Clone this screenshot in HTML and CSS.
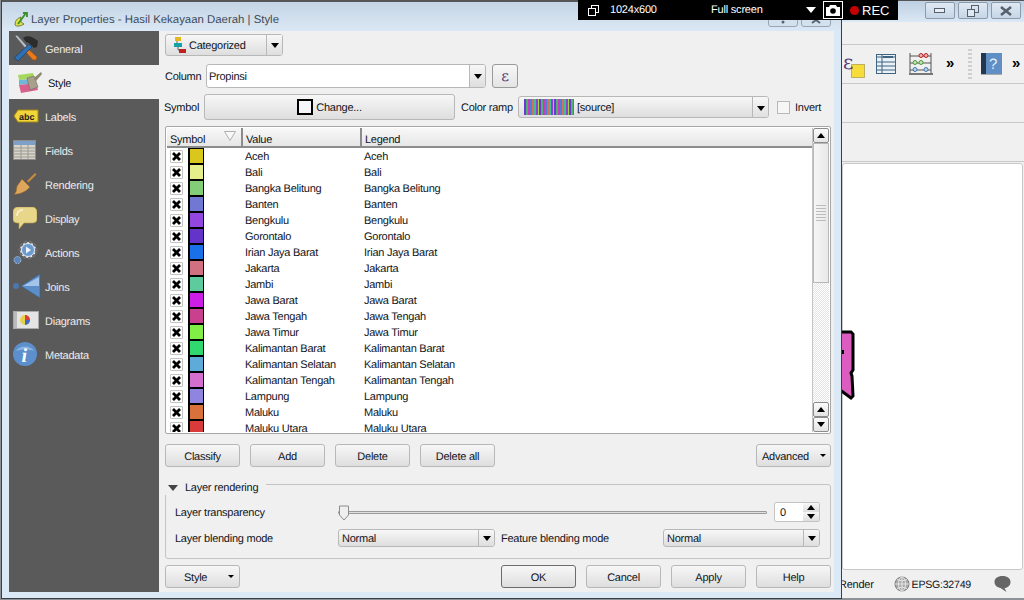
FILE: index.html
```html
<!DOCTYPE html>
<html lang="id">
<head>
  <meta charset="UTF-8" />
  <title>Layer Properties</title>
  <link rel="stylesheet" href="styles.css">
</head>
<body>
  <!-- main window behind the dialog -->
  <div class="main-window">
    <div class="win-title">
      <div class="win-btn"><svg width="12" height="6"><rect x="0.5" y="0.5" width="10" height="4" fill="#e8eef4" stroke="#56606c"/></svg></div>
      <div class="win-btn"><svg width="12" height="12"><rect x="4.5" y="0.5" width="7" height="7" fill="none" stroke="#56606c"/><rect x="0.5" y="4.5" width="7" height="7" fill="#dfe8f2" stroke="#56606c"/></svg></div>
      <div class="win-btn"><svg width="12" height="10"><path d="M1 1l10 8M11 1L1 9" stroke="#56606c" stroke-width="2.5"/></svg></div>
    </div>
    <div class="tool-row tool-row-blank"></div>
    <div class="tool-row tool-row-icons">
      <svg class="tool-eps" width="22" height="30" viewBox="0 0 22 30">
        <rect x="8.5" y="15.5" width="13" height="13" fill="#f6dd3c" stroke="#8a7a20" stroke-dasharray="1 1"/>
        <text x="0" y="20" class="eps-glyph">ε</text>
      </svg>
      <svg class="tool-table" width="20" height="20" viewBox="0 0 20 20">
        <rect x="0.5" y="0.5" width="19" height="19" fill="#e9f0f6" stroke="#3f6582"/>
        <path d="M1 3h18M1 8h18M1 12h18M1 16h18M6 1v18" stroke="#3f6582" fill="none"/>
        <rect x="7" y="2" width="10" height="2" fill="#3f6582"/>
      </svg>
      <svg class="tool-abacus" width="24" height="24" viewBox="0 0 24 24">
        <path d="M1 1v20M22 1v20M1 4h21M1 11h21M1 18h21" stroke="#555" fill="none"/>
        <rect x="0" y="21" width="24" height="2" fill="#777"/>
        <circle cx="12" cy="3.5" r="2" fill="#f2b0b0" stroke="#b52020"/><circle cx="17" cy="3.5" r="2" fill="#f2b0b0" stroke="#b52020"/>
        <circle cx="6" cy="10.500" r="2" fill="#bfe3b0" stroke="#4e9a3a"/><circle cx="12" cy="10.500" r="2" fill="#bfe3b0" stroke="#4e9a3a"/>
        <circle cx="6" cy="17.500" r="2" fill="#bcd4ea" stroke="#3f78aa"/><circle cx="17" cy="17.500" r="2" fill="#bcd4ea" stroke="#3f78aa"/>
      </svg>
      <span class="more more-a">»</span>
      <span class="tool-grip"></span>
      <svg class="tool-help" width="21" height="22" viewBox="0 0 21 22">
        <rect x="0" y="0" width="21" height="21" fill="#5f8fc4"/>
        <rect x="0" y="0" width="5" height="21" fill="#22384f"/>
        <rect x="0" y="21" width="21" height="1" fill="#aaa"/>
        <text x="8" y="16" class="help-glyph">?</text>
      </svg>
      <span class="more more-b">»</span>
    </div>
    <div class="tool-row tool-row-plain"></div>
    <div class="tool-row tool-row-plain"></div>
    <div class="canvas">
      <svg class="map-shape" width="13" height="72" viewBox="0 0 13 72">
        <path d="M-2 2h11l2 2v36l-2 3 1 3 1 20-2 2-11-8z" fill="#dc5cc0" stroke="#000" stroke-width="3"/>
        <path d="M0 20h2v4H0z" fill="#000"/>
      </svg>
    </div>
    <div class="status">
      <span class="status-render">Render</span>
      <svg class="status-globe" width="16" height="16" viewBox="0 0 16 16">
        <circle cx="8" cy="8" r="7" fill="#a9a9a9" stroke="#777"/>
        <path d="M1 8h14M8 1v14M3 3.500q5 3 10 0M3 12.500q5-3 10 0" stroke="#e6e6e6" fill="none"/>
        <ellipse cx="8" cy="8" rx="3.500" ry="7" fill="none" stroke="#e6e6e6"/>
      </svg>
      <span class="status-crs">EPSG:32749</span>
      <svg class="status-msg" width="17" height="16" viewBox="0 0 17 16">
        <path d="M8.500 0c5 0 8 2.500 8 6s-3 6-6 6l2 4-6-4c-3-.5-6-2.500-6-6s3-6 8-6z" fill="#666"/>
      </svg>
    </div>
  </div>

  <!-- layer properties dialog -->
  <div class="dialog">
    <div class="dialog-title">
      <svg class="qgis-icon" width="14" height="15" viewBox="0 0 14 15">
        <path d="M1 13C1 7 5 6 7 5c-1 3 0 6 3 7-3 2-7 3-9 1z" fill="#dfe04a" stroke="#566b1c" stroke-width=".8"/>
        <path d="M4 12L12 1M9 1h4v4" stroke="#3d8f28" stroke-width="1.800" fill="none"/>
      </svg>
      <span class="dialog-title-text">Layer Properties - Hasil Kekayaan Daerah | Style</span>
      <span class="title-btn"><svg width="4" height="6"><circle cx="2" cy="4" r="1.500" fill="#5a6470"/></svg></span>
      <span class="title-btn"><svg width="10" height="6"><path d="M1 5l4-3 4 3" stroke="#5a6470" stroke-width="2" fill="none"/></svg></span>
    </div>

    <div class="dialog-body">
      <div class="sidebar">
        <div class="side-item">
          <svg class="side-icon" width="26" height="26" viewBox="0 0 26 26">
            <path d="M2 1l2-1 10 11-2 2z" fill="#b8c0c8" stroke="#555" stroke-width=".6"/>
            <path d="M13 12l11 10-1 3-3 0-10-11z" fill="#ea7a1c" stroke="#9a4a10" stroke-width=".6"/>
            <path d="M16 9l3 3L5 26l-4-3z" fill="#2f6fb4" stroke="#17385c" stroke-width=".6"/>
            <path d="M10 3c4-3 9-2 15 3l-1 6-3 1-5-5-3-1z" fill="#2c2c2c"/>
          </svg>
          <span>General</span>
        </div>
        <div class="side-item side-item-active">
          <svg class="side-icon" width="26" height="22" viewBox="0 0 26 22">
            <path d="M2 4l15-2 2 6-16 1z" fill="#a6d860"/>
            <path d="M3 9l16-1 1 4-17 2z" fill="#6fb6d8"/>
            <path d="M3 14l17-2 2 7-17 3z" fill="#d8608c"/>
            <path d="M11 7l7-2 4 11-8 3z" fill="#a8a08c" stroke="#6e685a" stroke-width=".6"/>
            <path d="M18 7l7-6 1 2-6 7z" fill="#8c8672"/>
          </svg>
          <span>Style</span>
        </div>
        <div class="side-item">
          <svg class="side-icon" width="26" height="14" viewBox="0 0 26 14">
            <path d="M1 7l4-6h20v12H5z" fill="#f2d43c" stroke="#a58a10"/>
            <text x="6" y="10.500" class="abc-glyph">abc</text>
          </svg>
          <span>Labels</span>
        </div>
        <div class="side-item">
          <svg class="side-icon" width="24" height="20" viewBox="0 0 24 20">
            <rect x="0.500" y="0.500" width="22" height="19" fill="#d8d4c8" stroke="#8c8c8c"/>
            <rect x="1" y="1" width="21" height="4" fill="#7ea0c8"/>
            <path d="M1 8h21M1 11h21M1 14h21M1 17h21M8 5v14M15 5v14" stroke="#9a9a94" fill="none"/>
          </svg>
          <span>Fields</span>
        </div>
        <div class="side-item">
          <svg class="side-icon" width="24" height="24" viewBox="0 0 24 24">
            <path d="M14 9l8-8 1.500 1.500-8 8z" fill="#c88a3c"/>
            <path d="M9 7l8 8-3 3c-3 2-8 5-13 4 3-2 2-5 3-8z" fill="#dca65c" stroke="#8a5a20" stroke-width=".6"/>
          </svg>
          <span>Rendering</span>
        </div>
        <div class="side-item">
          <svg class="side-icon" width="24" height="22" viewBox="0 0 24 22">
            <path d="M5 0h14c3 0 5 2 5 5v7c0 3-2 4-5 4h-8l-5 6 0-6H5c-3 0-5-1-5-4V5c0-3 2-5 5-5z" fill="#e8d68a" stroke="#b8a040" stroke-width=".6"/>
            <path d="M4 9c0-4 2-6 6-6" stroke="#fbf6dc" stroke-width="1.500" fill="none"/>
          </svg>
          <span>Display</span>
        </div>
        <div class="side-item">
          <svg class="side-icon" width="26" height="26" viewBox="0 0 26 26">
            <circle cx="15" cy="11" r="8" fill="#e8eef4" stroke="#6c6c6c" stroke-width="3" stroke-dasharray="3 1.800"/>
            <circle cx="15" cy="11" r="6.500" fill="#6a9ad0" stroke="#dfe8f2"/>
            <path d="M13 7.500l5 3.500-5 3.500z" fill="#f2f6fa"/>
            <circle cx="4.500" cy="21" r="3.500" fill="#5a86bc" stroke="#a8bcd0" stroke-dasharray="2 1"/>
          </svg>
          <span>Actions</span>
        </div>
        <div class="side-item">
          <svg class="side-icon" width="28" height="26" viewBox="0 0 28 26">
            <path d="M8 13L27 1v24z" fill="#5c8ec8" stroke="#34608e" stroke-width=".6"/>
            <path d="M10 13l16-9v9z" fill="#a4c4e8"/>
            <circle cx="3" cy="13" r="3" fill="#4a78ac"/>
          </svg>
          <span>Joins</span>
        </div>
        <div class="side-item">
          <svg class="side-icon" width="26" height="18" viewBox="0 0 26 18">
            <rect x="0.500" y="0.500" width="25" height="17" fill="#e4e4e4" stroke="#aaa"/>
            <rect x="1" y="1" width="3" height="16" fill="#bbb"/>
            <circle cx="12" cy="9" r="5" fill="#e8d04a"/>
            <path d="M12 9V4a5 5 0 0 1 5 5z" fill="#d83c3c"/>
            <path d="M12 9h5a5 5 0 0 1-5 5z" fill="#3c68c8"/>
          </svg>
          <span>Diagrams</span>
        </div>
        <div class="side-item">
          <svg class="side-icon" width="24" height="24" viewBox="0 0 24 24">
            <circle cx="12" cy="12" r="12" fill="#5c8fcc"/>
            <path d="M3 9a10 8 0 0 1 18 0c-5-2-13-2-18 0z" fill="#8cb4e0"/>
            <text x="8.500" y="20" class="info-glyph">i</text>
          </svg>
          <span>Metadata</span>
        </div>
      </div>

      <div class="panel">
        <div class="type-row">
          <div class="split-btn">
            <div class="split-main">
              <svg width="12" height="16" viewBox="0 0 12 16">
                <rect x="1" y="0" width="6" height="4" fill="#e8b818"/>
                <rect x="0" y="6" width="8" height="4" fill="#18a0a8"/>
                <rect x="5" y="12" width="7" height="4" fill="#c02020"/>
                <path d="M3 4v2M4 10v3h1" stroke="#666" fill="none"/>
              </svg>
              <span class="split-text">Categorized</span>
            </div>
            <div class="combo-arrow"><i class="tri"></i></div>
          </div>
        </div>

        <div class="column-row">
          <span class="column-label">Column</span>
          <div class="combo combo-edit combo-column">
            <span class="combo-text">Propinsi</span>
            <div class="combo-arrow"><i class="tri"></i></div>
          </div>
          <div class="eps-btn">ε</div>
        </div>

        <div class="symbol-row">
          <span class="symbol-label">Symbol</span>
          <div class="btn change-btn"><i class="change-swatch"></i>Change...</div>
          <span class="ramp-label">Color ramp</span>
          <div class="combo combo-ramp">
            <i class="ramp"></i>
            <span class="combo-text">[source]</span>
            <div class="combo-arrow"><i class="tri"></i></div>
          </div>
          <i class="check"></i>
          <span class="invert-label">Invert</span>
        </div>

        <div class="table">
          <div class="table-main">
            <div class="table-head">
              <div class="head-cell head-symbol">Symbol
                <svg class="sort-mark" width="12" height="10" viewBox="0 0 12 10"><path d="M.5.500h11L6 9.500z" fill="#f8f8f8" stroke="#b0b0b0"/></svg>
              </div>
              <div class="head-cell">Value</div>
              <div class="head-cell">Legend</div>
            </div>
            <div class="table-rows" id="rows"></div>
          </div>
          <div class="scrollbar">
            <div class="scroll-btn"><i class="tri tri-up"></i></div>
            <div class="scroll-thumb"><i class="scroll-grip"></i></div>
            <div class="scroll-track"></div>
            <div class="scroll-btn"><i class="tri tri-up"></i></div>
            <div class="scroll-btn"><i class="tri"></i></div>
          </div>
        </div>

        <div class="button-row">
          <div class="btn btn-std">Classify</div>
          <div class="btn btn-std">Add</div>
          <div class="btn btn-std">Delete</div>
          <div class="btn btn-std">Delete all</div>
          <div class="btn btn-std btn-advanced">Advanced<i class="tri tri-small"></i></div>
        </div>

        <div class="group">
          <div class="group-title"><i class="group-tri"></i>Layer rendering</div>
          <div class="group-row group-row-slider">
            <span class="group-label">Layer transparency</span>
            <div class="slider">
              <svg class="slider-handle" width="12" height="16" viewBox="0 0 12 16">
                <path d="M1.500 1h9v9l-4.500 5-4.500-5z" fill="#efefef" stroke="#8c8c8c"/>
              </svg>
            </div>
            <div class="spin">
              <span class="spin-value">0</span>
              <div class="spin-btns">
                <div class="spin-btn"><i class="tri tri-up"></i></div>
                <div class="spin-btn"><i class="tri"></i></div>
              </div>
            </div>
          </div>
          <div class="group-row">
            <span class="group-label">Layer blending mode</span>
            <div class="combo combo-blend">
              <span class="combo-text">Normal</span>
              <div class="combo-arrow"><i class="tri"></i></div>
            </div>
            <span class="feature-label">Feature blending mode</span>
            <div class="combo combo-blend">
              <span class="combo-text">Normal</span>
              <div class="combo-arrow"><i class="tri"></i></div>
            </div>
          </div>
        </div>

        <div class="bottom-row">
          <div class="btn btn-std btn-style">Style<i class="tri tri-small"></i></div>
          <div class="btn btn-std btn-ok">OK</div>
          <div class="btn btn-std">Cancel</div>
          <div class="btn btn-std">Apply</div>
          <div class="btn btn-std">Help</div>
        </div>
      </div>
    </div>
  </div>

  <!-- screen recorder bar -->
  <div class="recorder">
    <svg class="rec-size" width="11" height="11"><rect x="3.500" y="0.500" width="7" height="7" fill="none" stroke="#fff"/><rect x="0.500" y="3.500" width="7" height="7" fill="#000" stroke="#fff"/></svg>
    <span class="rec-dim">1024x600</span>
    <span class="rec-full">Full screen</span>
    <i class="rec-tri"></i>
    <div class="rec-cam">
      <svg width="14" height="11" viewBox="0 0 14 11"><path d="M0 2h3l1-2h6l1 2h3v9H0z" fill="#fff"/><circle cx="7" cy="6" r="2.800" fill="#000"/></svg>
    </div>
    <i class="rec-dot"></i>
    <span class="rec-label">REC</span>
  </div>

  <script>
    const classes = [
      ["Aceh", "#d9c71c"], ["Bali", "#e4ee8b"], ["Bangka Belitung", "#83cc78"],
      ["Banten", "#7178d3"], ["Bengkulu", "#9248e0"], ["Gorontalo", "#6433c9"],
      ["Irian Jaya Barat", "#1a70e8"], ["Jakarta", "#d07080"], ["Jambi", "#5ecb9f"],
      ["Jawa Barat", "#cc1ee6"], ["Jawa Tengah", "#c9408f"], ["Jawa Timur", "#80ee45"],
      ["Kalimantan Barat", "#30d970"], ["Kalimantan Selatan", "#5eaad8"],
      ["Kalimantan Tengah", "#d46fd0"], ["Lampung", "#8f85e0"],
      ["Maluku", "#d9713a"], ["Maluku Utara", "#d93a3a"]
    ];
    const rows = document.getElementById("rows");
    classes.forEach(([name, color]) => {
      const row = document.createElement("div");
      row.className = "row";
      row.innerHTML = `
        <div class="row-symbol">
          <span class="row-check"><svg width="9" height="9" viewBox="0 0 9 9"><path d="M1 1l7 7M8 1L1 8" stroke="#000" stroke-width="2.800"/></svg></span>
          <i class="swatch" style="background:${color}"></i>
        </div>
        <div class="row-value">${name}</div>
        <div class="row-legend">${name}</div>`;
      rows.appendChild(row);
    });
  </script>
</body>
</html>
```

FILE: styles.css
```css
* {
  box-sizing: border-box;
}

html, body {
  margin: 0;
  height: 100%;
}

body {
  position: relative;
  width: 1024px;
  height: 600px;
  overflow: hidden;
  background: #8d9299;
  font-family: "Liberation Sans", Arial, sans-serif;
  font-size: 11px;
  letter-spacing: -0.25px;
  color: #10141c;
  text-rendering: geometricPrecision;
}

i {
  display: block;
  flex: none;
}

/* text sits a pixel low in its box, as in the native widgets */
.split-text,
.combo-text,
.column-label,
.symbol-label,
.ramp-label,
.invert-label,
.group-label,
.feature-label,
.status-render,
.status-crs,
.spin-value,
.row-value,
.row-legend {
  padding-top: 2px;
}

/* main window */
.main-window {
  position: absolute;
  left: 600px;
  right: 0;
  top: 0;
  height: 598px;
  padding-left: 242px;
  display: flex;
  flex-direction: column;
  background: #f0f0f0;
  border-top: 1px solid #555;
}

.win-title {
  height: 21px;
  display: flex;
  justify-content: flex-end;
  gap: 3px;
  padding: 1px 3px 0 0;
  background: linear-gradient(#bdcfe2, #dbe8f5);
}

.win-btn {
  width: 30px;
  height: 17px;
  display: flex;
  align-items: center;
  justify-content: center;
  background: linear-gradient(#dfe9f4, #c6d6e6);
  border: 1px solid #8c9aaa;
  border-radius: 2px;
}

.tool-row {
  border-bottom: 1px solid #c8c8c8;
  flex: none;
}

.tool-row-blank {
  height: 23px;
}

.tool-row-icons {
  height: 39px;
  display: flex;
  align-items: center;
  position: relative;
}

.tool-row-plain {
  height: 39px;
}

.tool-row-plain + .tool-row-plain {
  margin-bottom: 1px;
}

.tool-eps {
  margin-left: 1px;
}

.eps-glyph {
  font-family: "DejaVu Serif", serif;
  font-size: 20px;
  fill: #5a3a78;
}

.tool-table {
  margin-left: 11px;
}

.tool-abacus {
  margin-left: 13px;
}

.more {
  font-size: 15px;
  font-weight: bold;
  color: #000;
  margin-top: -2px;
}

.more-a {
  margin-left: 13px;
}

.more-b {
  margin-left: 10px;
}

.tool-grip {
  width: 4px;
  height: 30px;
  margin-left: 14px;
  background: repeating-linear-gradient(#cfcfcf 0 2px, transparent 2px 4px);
}

.tool-help {
  margin-left: 9px;
}

.help-glyph {
  font-size: 15px;
  fill: #e8f0f8;
  font-family: "Liberation Sans", sans-serif;
}

.canvas {
  flex: 1;
  position: relative;
  background: #fff;
  border: 1px solid #c8c8c8;
  border-radius: 3px;
  margin-right: 1px;
}

.map-shape {
  position: absolute;
  left: -1px;
  top: 166px;
}

.status {
  height: 28px;
  flex: none;
  display: flex;
  align-items: center;
  margin-left: -3px;
}

.status-globe {
  margin-left: 20px;
  margin-right: 2px;
}

.status-crs {
  font-size: 10.600px;
}

.status-msg {
  margin-left: 23px;
}

/* dialog */
.dialog {
  position: absolute;
  left: 1px;
  top: 0;
  width: 841px;
  height: 599px;
  display: flex;
  flex-direction: column;
  border: 1px solid #3a3f46;
  border-top-width: 2px;
  border-top-color: #555;
  background: #dbe8f5;
}

.dialog-title {
  height: 29px;
  flex: none;
  display: flex;
  padding: 0 10px 0 12px;
  gap: 3px;
  background: linear-gradient(#c4d4e4, #dbe8f5);
}

.qgis-icon {
  margin-top: 10px;
  flex: none;
}

.dialog-title-text {
  flex: 1;
  line-height: 37px;
  font-size: 11.400px;
  letter-spacing: 0;
  color: #3d4a58;
}

.title-btn {
  width: 30px;
  height: 25px;
  display: flex;
  align-items: flex-end;
  justify-content: center;
  padding-bottom: 2px;
  background: #d3e0ee;
  border: 1px solid #97a6b6;
  border-radius: 0 0 3px 3px;
}

.dialog-body {
  flex: 1;
  display: flex;
  margin: 0 7px 6px;
  background: #f0f0f0;
  min-height: 0;
}

/* sidebar */
.sidebar {
  width: 150px;
  flex: none;
  background: #5a5a5a;
  color: #ececec;
}

.side-item {
  height: 34px;
  display: flex;
  align-items: center;
  position: relative;
  padding: 3px 0 0 36px;
}

.side-item-active {
  background: #f0f0f0;
  color: #10141c;
  padding-left: 39px;
}

.side-icon {
  position: absolute;
  left: 4px;
  top: 50%;
  transform: translateY(-50%);
}

.side-item-active .side-icon {
  left: 7px;
}

/* panel */
.panel {
  flex: 1;
  min-width: 0;
  display: flex;
  flex-direction: column;
  padding: 3px 3px 0 6px;
  background: #f0f0f0;
}

.btn {
  height: 23px;
  padding-top: 2px;
  display: flex;
  align-items: center;
  justify-content: center;
  background: linear-gradient(#f7f7f7, #dedede);
  border: 1px solid #b8b8b8;
  border-radius: 3px;
  flex: none;
}

.btn i {
  margin-top: -2px;
}

.btn-std {
  width: 75px;
}

.tri {
  width: 0;
  height: 0;
  border-left: 4px solid transparent;
  border-right: 4px solid transparent;
  border-top: 5px solid #000;
}

.tri-up {
  border-top: 0;
  border-bottom: 5px solid #000;
}

.tri-small {
  border-left-width: 3px;
  border-right-width: 3px;
  border-top-width: 3px;
}

.type-row {
  height: 22px;
  display: flex;
}

.split-btn {
  width: 118px;
  display: flex;
  background: linear-gradient(#f7f7f7, #dedede);
  border: 1px solid #b8b8b8;
  border-radius: 3px;
}

.split-main {
  flex: 1;
  display: flex;
  align-items: center;
  gap: 3px;
  padding-left: 8px;
}

.combo-arrow {
  width: 16px;
  flex: none;
  display: flex;
  align-items: center;
  justify-content: center;
  border-left: 1px solid #b8b8b8;
  align-self: stretch;
  background: linear-gradient(#f7f7f7, #dedede);
}

.column-row {
  height: 24px;
  margin-top: 8px;
  display: flex;
  align-items: center;
}

.column-label {
  width: 41px;
}

.combo {
  display: flex;
  align-items: stretch;
  background: linear-gradient(#f7f7f7, #dedede);
  border: 1px solid #b8b8b8;
  border-radius: 3px;
  flex: none;
  overflow: hidden;
}

.combo-text {
  flex: 1;
  display: flex;
  align-items: center;
  padding-left: 3px;
}

.combo-edit {
  background: #fff;
}

.combo-column {
  width: 280px;
  height: 24px;
}

.combo-column .combo-text {
  padding-left: 2px;
}

.eps-btn {
  width: 26px;
  height: 24px;
  margin-left: 6px;
  display: flex;
  align-items: center;
  justify-content: center;
  font-family: "DejaVu Serif", serif;
  font-size: 15px;
  color: #5a3a78;
  background: linear-gradient(#f7f7f7, #e4e4e4);
  border: 1px solid #9a9a9a;
  border-radius: 3px;
}

.symbol-row {
  height: 26px;
  margin-top: 6px;
  display: flex;
  align-items: center;
}

.symbol-label {
  width: 40px;
  margin-left: -1px;
}

.change-btn {
  width: 251px;
  height: 26px;
  gap: 3px;
}

.change-swatch {
  width: 16px;
  height: 16px;
  background: #f5f5fa;
  border: 2px solid #000;
}

.ramp-label {
  width: 57px;
  margin-left: 6px;
}

.combo-ramp {
  width: 251px;
  height: 22px;
  align-items: center;
}

.ramp {
  width: 50px;
  height: 16px;
  margin-left: 5px;
  background: repeating-linear-gradient(90deg, #6c3ad0 0 2px, #50b070 2px 4px, #c83cc0 4px 6px, #4a82d8 6px 8px, #d07060 8px 10px, #3cc090 10px 12px, #9040d8 12px 14px, #a0d840 14px 15px);
}

.combo-ramp .combo-arrow {
  height: 22px;
}

.check {
  width: 13px;
  height: 13px;
  margin: 0 5px 0 8px;
  background: #f6f6f6;
  border: 1px solid #b8b8b8;
}

/* table */
.table {
  height: 308px;
  margin-top: 6px;
  display: flex;
  padding: 1px;
  background: #fff;
  border: 1px solid #a8a8a8;
  border-radius: 2px;
}

.table-main {
  flex: 1;
  min-width: 0;
  display: flex;
  flex-direction: column;
}

.table-head {
  height: 20px;
  flex: none;
  display: grid;
  grid-template-columns: 76px 119px 1fr;
}

.head-cell {
  display: flex;
  align-items: center;
  position: relative;
  padding: 5px 0 0 3px;
  background: linear-gradient(#f8f8f8, #e6e6e6);
  border-right: 2px solid #8c8c8c;
  border-bottom: 2px solid #8c8c8c;
}

.head-cell:last-child {
  border-right: 0;
}

.sort-mark {
  position: absolute;
  right: 5px;
  top: 3px;
}

.table-rows {
  flex: 1;
  overflow: hidden;
  background: #fff;
}

.row {
  height: 16px;
  display: grid;
  grid-template-columns: 76px 119px 1fr;
  align-items: center;
}

.row-symbol {
  height: 16px;
  display: flex;
  align-items: center;
  padding-left: 3px;
}

.row-check {
  width: 13px;
  height: 13px;
  flex: none;
  margin-top: 1px;
  display: flex;
  align-items: center;
  justify-content: center;
  background: #fff;
  border: 1px solid #c4c4c4;
  border-radius: 1px;
}

.swatch {
  width: 16px;
  height: 16px;
  margin-left: 5px;
  border: 1px solid #000;
  border-left-width: 2px;
  border-right-width: 1px;
}

.row-value {
  padding-left: 2px;
}

.row-legend {
  padding-left: 2px;
}

.scrollbar {
  width: 17px;
  flex: none;
  display: flex;
  flex-direction: column;
  background: #fff;
  border-left: 1px solid #c4c4c4;
}

.scroll-btn {
  height: 15px;
  flex: none;
  display: flex;
  align-items: center;
  justify-content: center;
  background: linear-gradient(#fbfbfb, #e4e4e4);
  border: 1px solid #8c8c8c;
  border-radius: 2px;
}

.scroll-thumb {
  height: 140px;
  flex: none;
  display: flex;
  align-items: center;
  justify-content: center;
  background: linear-gradient(90deg, #f6f6f6, #e8e8e8);
  border: 1px solid #b8b8b8;
}

.scroll-grip {
  width: 10px;
  height: 16px;
  background: repeating-linear-gradient(#bcbcbc 0 1px, transparent 1px 3px);
}

.scroll-track {
  flex: 1;
  background: repeating-conic-gradient(#e4e4e4 0 25%, #fff 0 50%) 0 0 / 2px 2px;
}

/* button row */
.button-row {
  margin-top: 10px;
  display: flex;
  gap: 10px;
}

.btn-advanced {
  margin-left: auto;
  justify-content: flex-start;
  padding-left: 5px;
  gap: 11px;
}

/* group box */
.group {
  position: relative;
  height: 75px;
  margin-top: 17px;
  padding: 17px 10px 0 9px;
  border: 1px solid #c4c4c4;
  border-radius: 3px;
  display: flex;
  flex-direction: column;
  gap: 7px;
}

.group-title {
  position: absolute;
  left: -1px;
  top: -4px;
  display: flex;
  align-items: center;
  height: 14px;
  padding-right: 8px;
  background: #f0f0f0;
}

.group-tri {
  width: 0;
  height: 0;
  margin: 0 7px 0 3px;
  border-left: 5px solid transparent;
  border-right: 5px solid transparent;
  border-top: 6px solid #444;
}

.group-row {
  height: 18px;
  display: flex;
  align-items: center;
}

.group-row-slider {
  height: 20px;
}

.group-label {
  width: 163px;
  flex: none;
}

.slider {
  position: relative;
  width: 429px;
  height: 3px;
  margin-right: 7px;
  background: #e0e0e0;
  border: 1px solid #9a9a9a;
  border-radius: 1px;
}

.slider-handle {
  position: absolute;
  left: -1px;
  top: -7px;
}

.spin {
  width: 46px;
  height: 20px;
  flex: none;
  display: flex;
  background: #fff;
  border: 1px solid #c4c4c4;
  border-radius: 2px;
}

.spin-value {
  flex: 1;
  display: flex;
  align-items: center;
  padding-left: 5px;
}

.spin-btns {
  width: 16px;
  display: flex;
  flex-direction: column;
}

.spin-btn {
  flex: 1;
  display: flex;
  align-items: center;
  justify-content: center;
  background: linear-gradient(#f7f7f7, #dedede);
}

.combo-blend {
  width: 157px;
  height: 18px;
}

.feature-label {
  width: 168px;
  flex: none;
  padding-left: 6px;
}

/* dialog buttons */
.bottom-row {
  margin-top: 6px;
  display: flex;
  gap: 10px;
}

.btn-style {
  margin-right: auto;
  justify-content: flex-start;
  padding-left: 18px;
  gap: 21px;
}

.btn-ok {
  border-color: #6c6c6c;
}

/* recorder */
.recorder {
  position: absolute;
  left: 578px;
  top: 0;
  width: 320px;
  height: 20px;
  display: flex;
  align-items: center;
  padding-left: 10px;
  background: #000;
  color: #fff;
  letter-spacing: -0.2px;
}

.rec-dim {
  margin-left: 11px;
  width: 101px;
}

.rec-full {
  width: 95px;
}

.rec-tri {
  width: 0;
  height: 0;
  border-left: 5px solid transparent;
  border-right: 5px solid transparent;
  border-top: 6px solid #fff;
}

.rec-cam {
  width: 20px;
  height: 18px;
  margin-left: 7px;
  display: flex;
  align-items: center;
  justify-content: center;
  border: 1px solid #fff;
}

.rec-dot {
  width: 9px;
  height: 9px;
  margin: 0 3px 0 7px;
  border-radius: 50%;
  background: #c80000;
}

.rec-label {
  font-size: 13px;
  letter-spacing: 0;
}

.abc-glyph {
  font-family: "Liberation Sans", sans-serif;
  font-weight: bold;
  font-size: 9px;
  letter-spacing: 0;
  fill: #1a1a1a;
}

.info-glyph {
  font-family: "Liberation Serif", serif;
  font-style: italic;
  font-weight: bold;
  font-size: 20px;
  fill: #fff;
}
```
